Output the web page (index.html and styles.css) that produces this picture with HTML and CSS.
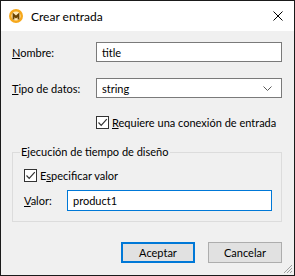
FILE: index.html
```html
<!DOCTYPE html>
<html lang="es">
<head>
    <meta charset="UTF-8">
    <title>Crear entrada</title>
    <link rel="stylesheet" href="styles.css">
</head>
<body>
    <div class="window">
        <!-- Title bar -->
        <div class="titlebar">
            <svg class="app-icon" width="14" height="14" viewBox="0 0 14 14">
                <circle cx="7" cy="7" r="7" fill="#f6a81c"/>
                <circle cx="7" cy="7" r="4.6" fill="#ffe9b8"/>
                <path d="M3.6 3.6 L7 6.4 L10.4 3.6 L10.4 10.4 L8.6 10.4 L8.6 8.2 L7 9.4 L5.4 8.2 L5.4 10.4 L3.6 10.4 Z" fill="#6b4200"/>
            </svg>
            <span class="title">Crear entrada</span>
            <svg class="close" width="10" height="10" viewBox="0 0 10 10">
                <path d="M0.5 0.5 L9.5 9.5 M9.5 0.5 L0.5 9.5" stroke="#000" stroke-width="1"/>
            </svg>
        </div>

        <div class="content">
            <div class="field-row">
                <label class="label"><u>N</u>ombre:</label>
                <div class="textbox">title</div>
            </div>
            <div class="field-row">
                <label class="label"><u>T</u>ipo de datos:</label>
                <div class="textbox select">
                    <span>string</span>
                    <svg class="chevron" width="9" height="5" viewBox="0 0 9 5">
                        <path d="M0.5 0.5 L4.5 4.5 L8.5 0.5" fill="none" stroke="#5a5a5a" stroke-width="1"/>
                    </svg>
                </div>
            </div>
            <div class="check-row indent">
                <span class="checkbox">
                    <svg width="11" height="11" viewBox="0 0 11 11">
                        <path d="M1.5 5.5 L4.2 8.3 L9.8 2.2" fill="none" stroke="#333" stroke-width="1.2"/>
                    </svg>
                </span>
                <span><u>R</u>equiere una conexión de entrada</span>
            </div>

            <!-- Design time group -->
            <fieldset class="group">
                <legend>Ejecución de tiempo de diseño</legend>
                <div class="check-row">
                    <span class="checkbox">
                        <svg width="11" height="11" viewBox="0 0 11 11">
                            <path d="M1.5 5.5 L4.2 8.3 L9.8 2.2" fill="none" stroke="#333" stroke-width="1.2"/>
                        </svg>
                    </span>
                    <span>E<u>s</u>pecificar valor</span>
                </div>
                <div class="field-row value-row">
                    <label class="label short"><u>V</u>alor:</label>
                    <div class="textbox focused">product1</div>
                </div>
            </fieldset>

            <div class="buttons">
                <button class="btn default">Aceptar</button>
                <button class="btn">Cancelar</button>
            </div>
        </div>

        <svg class="grip" width="10" height="10" viewBox="0 0 10 10">
            <path d="M9 1 L1 9 M9 4 L4 9 M9 7 L7 9" stroke="#a0a0a0" stroke-width="1"/>
        </svg>
    </div>
</body>
</html>
```

FILE: styles.css
```css
* {
    box-sizing: border-box;
}

body {
    margin: 0;
    padding: 0;
    font-family: Lato, "Liberation Sans", sans-serif;
    font-size: 11px;
    line-height: 15px;
    color: #000;
}

/* Window frame */
.window {
    position: relative;
    width: 295px;
    height: 276px;
    border: 1px solid #1a1a1a;
    background: #f0f0f0;
    display: flex;
    flex-direction: column;
    overflow: hidden;
}

.titlebar {
    flex-shrink: 0;
    height: 30px;
    background: #fff;
    display: flex;
    align-items: center;
    padding-left: 8px;
}

.app-icon {
    margin-right: 8px;
}

.title {
    flex: 1;
    font-size: 12px;
}

.close {
    margin-right: 11px;
}

/* Dialog body */
.content {
    padding: 11px 12px 0 11px;
    display: flex;
    flex-direction: column;
    white-space: nowrap;
}

.field-row {
    display: flex;
    align-items: center;
    margin-bottom: 16px;
}

.label {
    width: 84px;
}

.label.short {
    width: 43px;
}

.textbox {
    flex: 1;
    height: 20px;
    border: 1px solid #7a7a7a;
    background: #fff;
    padding: 0 5px;
    display: flex;
    align-items: center;
}

.select span {
    flex: 1;
}

.chevron {
    margin-right: 4px;
}

.textbox.focused {
    border-color: #0078d7;
    height: 21px;
}

.check-row {
    display: flex;
    align-items: center;
    margin-top: 1px;
}

.check-row.indent {
    margin-left: 84px;
}

.checkbox {
    width: 13px;
    height: 13px;
    border: 1px solid #333;
    background: #fff;
    display: flex;
    align-items: center;
    justify-content: center;
    margin-right: 3px;
}

/* Group box */
.group {
    margin: 14px 0 0 0;
    padding: 7px 9px 10px 11px;
    border: 1px solid #dcdcdc;
    min-width: 0;
}

.group legend {
    padding: 0 2px 0 1px;
    margin-left: -4px;
    line-height: 16px;
}

.value-row {
    margin: 7px 0 0 0;
}

/* Buttons */
.buttons {
    display: flex;
    justify-content: flex-end;
    gap: 13px;
    margin-top: 20px;
}

.btn {
    width: 74px;
    height: 21px;
    font-family: inherit;
    font-size: 11px;
    color: #000;
    background: #e1e1e1;
    border: 1px solid #adadad;
    padding: 0;
}

.btn.default {
    border: 2px solid #0078d7;
}

.grip {
    position: absolute;
    right: 1px;
    bottom: 1px;
}
```
